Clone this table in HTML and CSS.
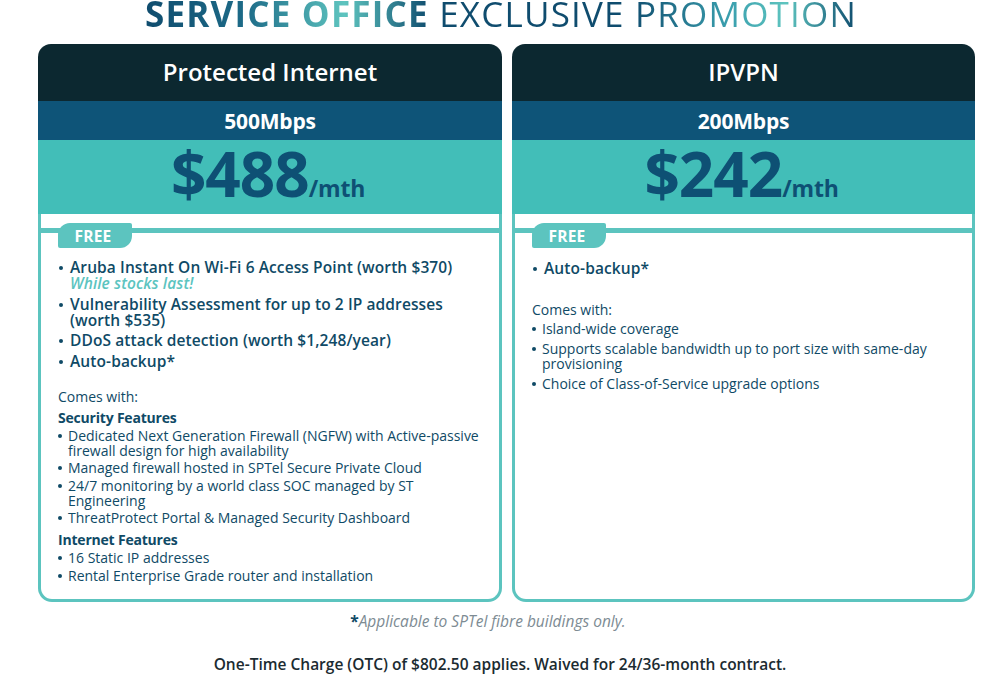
FILE: index.html
```html
<!DOCTYPE html>
<html lang="en">
<head>
<meta charset="utf-8">
<title>Service Office Exclusive Promotion</title>
<link rel="stylesheet" href="styles.css">
</head>
<body>
<div class="page">
  <h1 class="title"><span class="title-text"><b>SERVICE OFFICE</b> EXCLUSIVE PROMOTION</span></h1>
  <div class="cards">
    <section class="card">
      <div class="card-head">Protected Internet</div>
      <div class="card-speed">500Mbps</div>
      <div class="card-price"><span class="amount">$488</span><span class="per">/mth</span></div>
      <div class="card-body">
        <div class="free-row"><span class="free-badge">FREE</span></div>
        <ul class="free-list">
          <li>Aruba Instant On Wi-Fi 6 Access Point (worth $370)<br><em class="stock">While stocks last!</em></li>
          <li>Vulnerability Assessment for up to 2 IP addresses<br>(worth $535)</li>
          <li>DDoS attack detection (worth $1,248/year)</li>
          <li>Auto-backup*</li>
        </ul>
        <p class="comes">Comes with:</p>
        <h3 class="feat-head">Security Features</h3>
        <ul class="feat-list">
          <li>Dedicated Next Generation Firewall (NGFW) with Active-passive<br>firewall design for high availability</li>
          <li>Managed firewall hosted in SPTel Secure Private Cloud</li>
          <li>24/7 monitoring by a world class SOC managed by ST<br>Engineering</li>
          <li>ThreatProtect Portal &amp; Managed Security Dashboard</li>
        </ul>
        <h3 class="feat-head feat-head-gap">Internet Features</h3>
        <ul class="feat-list">
          <li>16 Static IP addresses</li>
          <li>Rental Enterprise Grade router and installation</li>
        </ul>
      </div>
    </section>
    <section class="card">
      <div class="card-head">IPVPN</div>
      <div class="card-speed">200Mbps</div>
      <div class="card-price"><span class="amount">$242</span><span class="per">/mth</span></div>
      <div class="card-body">
        <div class="free-row"><span class="free-badge">FREE</span></div>
        <ul class="free-list free-list-short">
          <li>Auto-backup*</li>
        </ul>
        <p class="comes">Comes with:</p>
        <ul class="feat-list feat-list-loose">
          <li>Island-wide coverage</li>
          <li>Supports scalable bandwidth up to port size with same-day<br>provisioning</li>
          <li>Choice of Class-of-Service upgrade options</li>
        </ul>
      </div>
    </section>
  </div>
  <p class="footnote"><span class="ast">*</span>Applicable to SPTel fibre buildings only.</p>
  <p class="otc">One-Time Charge (OTC) of $802.50 applies. Waived for 24/36-month contract.</p>
</div>
</body>
</html>
```

FILE: styles.css
```css
* { box-sizing: border-box; }
html, body { margin: 0; padding: 0; background: #ffffff; }
body {
  font-family: "Open Sans", "Liberation Sans", sans-serif;
  color: #0f4a66;
  width: 1000px;
  height: 677px;
  overflow: hidden;
}
.page { width: 1000px; display: flow-root; }

.title {
  margin: -10px 0 0 0;
  height: 54px;
  text-align: center;
  font-size: 35px;
  line-height: normal;
  font-weight: 400;
  letter-spacing: 1.2px;
  padding-left: 2px;
}
.title-text {
  display: inline-block;
  line-height: normal;
  background: linear-gradient(90deg, #0f4c6e 0%, #1d6b88 14%, #5ec4bf 28%, #0f4c6e 40%, #0f4c6e 68%, #3a9fae 82%, #5ec4bf 90%, #0f4c6e 100%);
  -webkit-background-clip: text;
  background-clip: text;
  color: transparent;
}
.title-text b { font-weight: 700; }

.cards {
  display: grid;
  grid-template-columns: 464px 463px;
  gap: 10px;
  padding-left: 38px;
}
.card {
  display: flex;
  flex-direction: column;
  height: 558px;
}
.card-head {
  background: #0c2830;
  color: #ffffff;
  border-radius: 13px 13px 0 0;
  height: 57px;
  display: flex;
  align-items: center;
  justify-content: center;
  font-size: 24px;
  font-weight: 600;
  letter-spacing: 0;
  padding-bottom: 2px;
}
.card-speed {
  background: #0e5478;
  color: #ffffff;
  height: 39px;
  display: flex;
  align-items: center;
  justify-content: center;
  font-size: 21px;
  font-weight: 700;
  letter-spacing: -0.2px;
}
.card-price {
  background: #42beb8;
  height: 74px;
  display: flex;
  align-items: baseline;
  justify-content: center;
  color: #0e5074;
  font-weight: 700;
  padding-right: 4px;
}
.amount {
  font-size: 62px;
  line-height: 66px;
  letter-spacing: -1px;
}
.per {
  font-size: 23px;
  letter-spacing: -0.2px;
}
.card-body {
  flex: 1;
  border: 3px solid #5cc4bf;
  border-top: 0;
  border-radius: 0 0 14px 14px;
  padding: 9px 0 0 0;
}
.free-row {
  height: 25px;
  display: flex;
  align-items: stretch;
  padding-left: 17px;
  background: linear-gradient(to bottom, transparent 5px, #5cc4bf 5px, #5cc4bf 10px, transparent 10px);
}
.free-badge {
  background: #5cc4bf;
  color: #ffffff;
  width: 74px;
  border-radius: 12px 2px 12px 2px;
  font-weight: 700;
  font-size: 15.5px;
  display: flex;
  align-items: center;
  justify-content: center;
  letter-spacing: 0.2px;
  padding-right: 4px;
}

ul { list-style: none; margin: 0; padding: 0; }
.free-list {
  margin: 11px 0 0 0;
  padding-left: 17px;
}
.free-list li {
  font-size: 15.5px;
  line-height: 16px;
  font-weight: 600;
  position: relative;
  padding-left: 12px;
  margin-bottom: 4.5px;
  letter-spacing: 0.1px;
}
.free-list li::before,
.feat-list li::before {
  content: "";
  position: absolute;
  left: 1px;
  width: 4px;
  height: 4px;
  border-radius: 50%;
  background: currentColor;
}
.free-list li::before { top: 7px; }
.stock {
  color: #5cc4bf;
  font-style: italic;
  font-weight: 600;
}
.free-list-short { margin-top: 12px; margin-bottom: 0; }
.free-list-short li { margin-bottom: 0; }

.comes {
  margin: 20px 0 0 0;
  padding-left: 17px;
  font-size: 14px;
  line-height: 15px;
  font-weight: 400;
}
.free-list-short + .comes { margin-top: 26px; }
.feat-head {
  margin: 6px 0 3px 0;
  padding-left: 17px;
  font-size: 14px;
  line-height: 15px;
  font-weight: 700;
  letter-spacing: -0.2px;
}
.feat-head-gap { margin-top: 7px; }
.feat-list {
  padding-left: 17px;
}
.feat-list li {
  font-size: 14px;
  line-height: 15px;
  font-weight: 400;
  position: relative;
  padding-left: 10px;
  margin-bottom: 2.6px;
  letter-spacing: 0;
}
.feat-list li::before { top: 6px; left: 0; }
.feat-list-loose { margin-top: 4px; }
.feat-list-loose li { margin-bottom: 5px; }

.footnote {
  margin: 10px 0 0 0;
  text-align: center;
  padding-right: 24px;
  font-size: 15.5px;
  line-height: 18px;
  color: #7d8b93;
  font-style: italic;
}
.ast { color: #0f4a66; font-style: normal; font-weight: 700; }
.otc {
  margin: 25px 0 0 0;
  text-align: center;
  font-size: 15.5px;
  line-height: 18px;
  color: #1b2b31;
  font-weight: 600;
}
```
